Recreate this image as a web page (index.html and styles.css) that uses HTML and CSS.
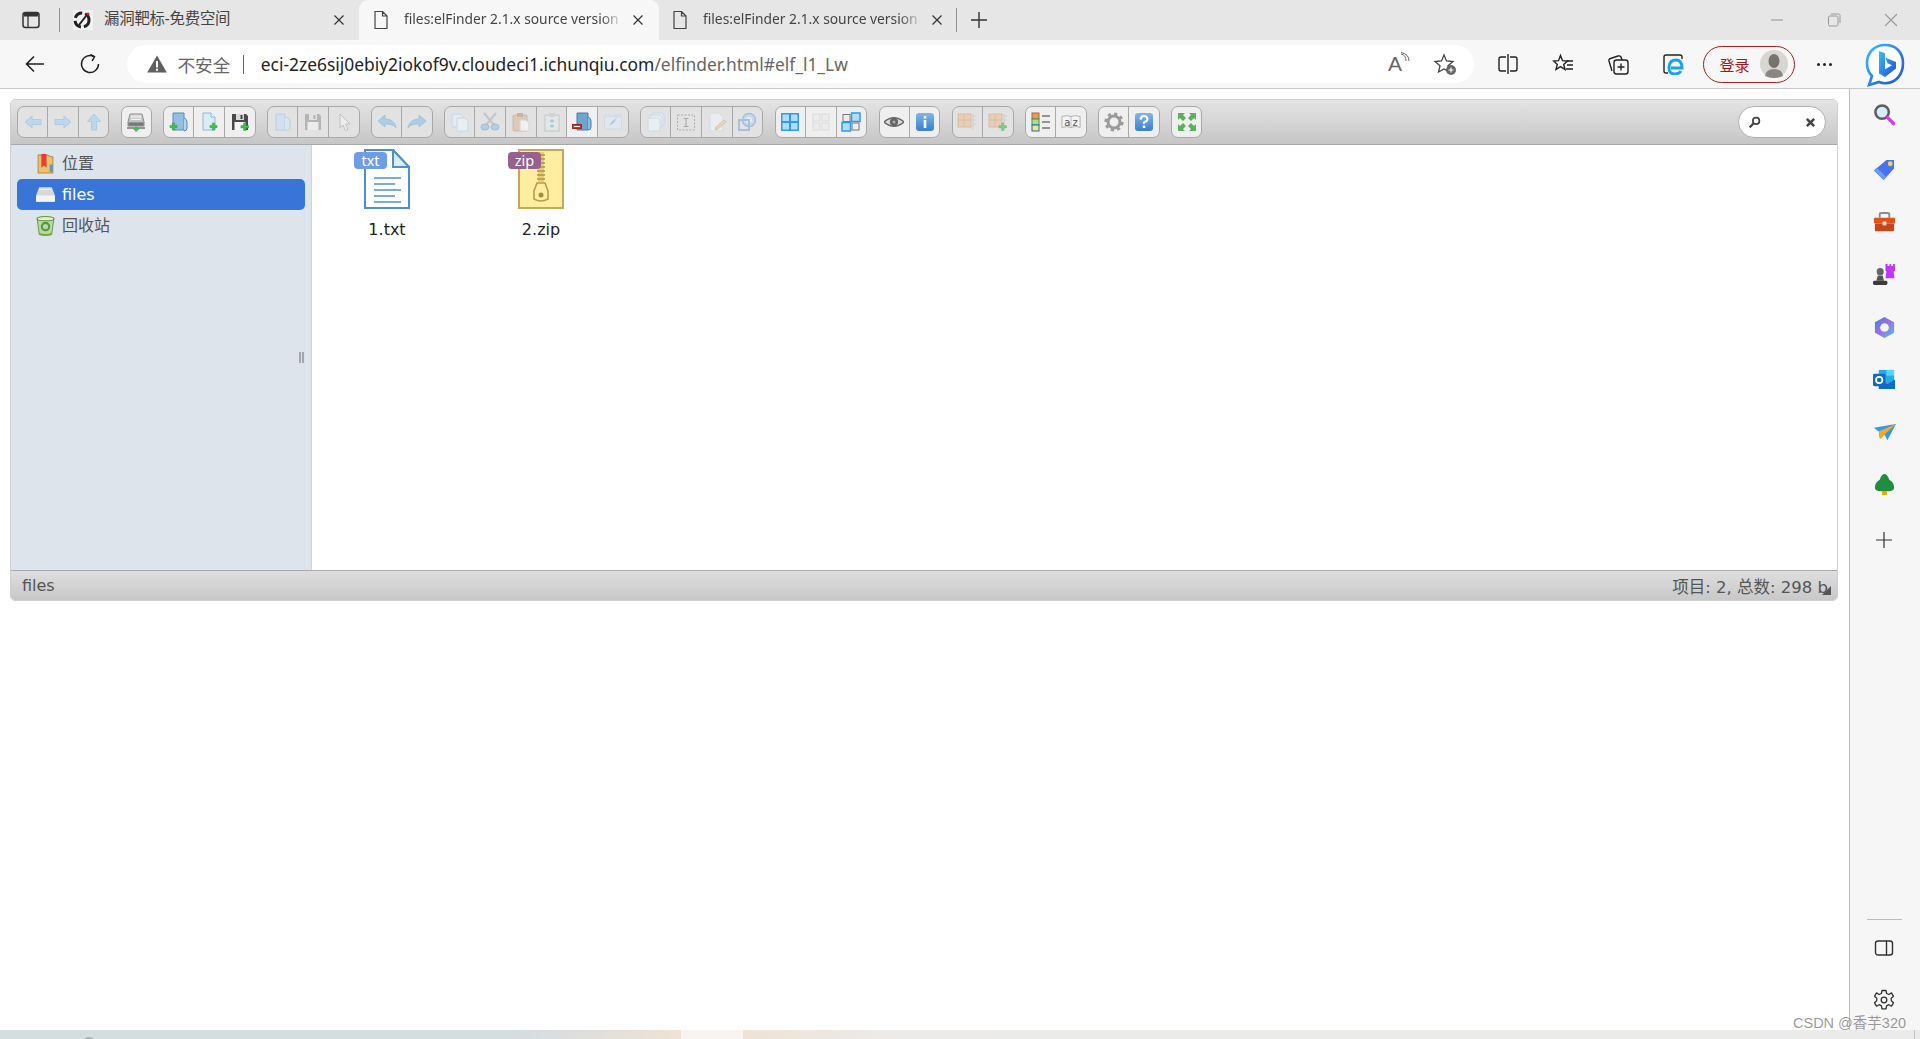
FILE: index.html
```html
<!DOCTYPE html>
<html lang="zh">
<head>
<meta charset="utf-8">
<title>files:elFinder 2.1.x source version</title>
<link rel="stylesheet" href="styles.css">
</head>
<body>
<svg class="defs" width="0" height="0" aria-hidden="true">
  <defs>
    <linearGradient id="gBlue" x1="0" y1="0" x2="0" y2="1"><stop offset="0" stop-color="#7fb6ea"/><stop offset="1" stop-color="#3b7fcb"/></linearGradient>
    <linearGradient id="gBing" x1="0" y1="0" x2="1" y2="1"><stop offset="0" stop-color="#37bdf8"/><stop offset="1" stop-color="#1e4fd8"/></linearGradient>
    <linearGradient id="gDrive" x1="0" y1="0" x2="0" y2="1"><stop offset="0" stop-color="#e2e2e2"/><stop offset="1" stop-color="#a8a8a8"/></linearGradient>
    <linearGradient id="gM" x1="0" y1="0" x2="1" y2="1"><stop offset="0" stop-color="#3f7fe0"/><stop offset=".5" stop-color="#a070e0"/><stop offset="1" stop-color="#40c8e8"/></linearGradient>
    <symbol id="plus" viewBox="0 0 20 20"><path d="M7.500 2h5v5.500h5.500v5h-5.500v5.500h-5v-5.500h-5.500v-5h5.500z" fill="#3fc04f" stroke="#2a9a3a"/></symbol>
    <symbol id="i-back" viewBox="0 0 20 20"><path d="M2 10l7-6v3.500h9v5H9V16z" fill="#a6d0f0" stroke="#8cbde2"/></symbol>
    <symbol id="i-forward" viewBox="0 0 20 20"><path d="M18 10l-7-6v3.500H2v5h9V16z" fill="#a6d0f0" stroke="#8cbde2"/></symbol>
    <symbol id="i-up" viewBox="0 0 20 20"><path d="M10 2l6.500 7.500h-4V18h-5V9.500h-4z" fill="#a6d0f0" stroke="#8cbde2"/></symbol>
    <symbol id="i-drive" viewBox="0 0 20 20"><path d="M4 2h12l2 8v4H2v-4z" fill="url(#gDrive)" stroke="#888"/><rect x="2.500" y="10.500" width="15" height="3" fill="#777"/><path d="M5 5h10M5 7.500h10" stroke="#f2f2f2"/><path d="M1 16h18" stroke="#777" stroke-width="1.300"/><rect x="9" y="14.500" width="2.400" height="5" fill="#3fc04f"/><rect x="7.500" y="15.700" width="5.400" height="2.400" fill="#3fc04f"/></symbol>
    <symbol id="i-mkdir" viewBox="0 0 20 20"><path d="M4 1h11v17H4z" fill="#94bfe2" stroke="#4c8dc0"/><path d="M15 6q3 1 3 4v6q0 3-3 3" fill="#b6d4ec" stroke="#4c8dc0"/><use href="#plus" x="0" y="10" width="9" height="9"/></symbol>
    <symbol id="i-mkfile" viewBox="0 0 20 20"><path d="M4 1h8l4 4v13H4z" fill="#dcebf8" stroke="#8cb8dc"/><path d="M12 1v4h4" fill="#f4f9fd" stroke="#8cb8dc"/><use href="#plus" x="10" y="10" width="9" height="9"/></symbol>
    <symbol id="i-upload" viewBox="0 0 20 20"><path d="M2 2h14l2 2v14H2z" fill="#4a4a4a"/><rect x="6" y="2" width="8" height="6" fill="#d8d8d8"/><rect x="10.500" y="3" width="2" height="4" fill="#444"/><rect x="4.500" y="10" width="11" height="8" fill="#f5f5f5"/><use href="#plus" x="10" y="10" width="9.500" height="9.500"/></symbol>
    <symbol id="i-open" viewBox="0 0 20 20"><path d="M3 2h9v16H3z" fill="#c6dff2" stroke="#9cc4e0"/><path d="M12 5q5 1 5 4v7q0 3-5 2" fill="#d6e8f6" stroke="#9cc4e0"/></symbol>
    <symbol id="i-save" viewBox="0 0 20 20"><path d="M2 2h14l2 2v14H2z" fill="#9a9a9a"/><rect x="6" y="2" width="8" height="6" fill="#e2e2e2"/><rect x="10.500" y="3" width="2" height="4" fill="#999"/><rect x="4.500" y="10" width="11" height="8" fill="#f2f2f2"/></symbol>
    <symbol id="i-select" viewBox="0 0 20 20"><path d="M6 2l10 10h-4.500l2.500 5.500-2.500 1-2.500-5.500L6 16z" fill="#f4f4f4" stroke="#aaa"/></symbol>
    <symbol id="i-undo" viewBox="0 0 20 20"><path d="M1 9l7-6v4c6 0 10 3 11 9-2-3-5-4-11-4v3z" fill="#8fc0e8" stroke="#7aaed8"/></symbol>
    <symbol id="i-redo" viewBox="0 0 20 20"><path d="M19 9l-7-6v4C6 7 2 10 1 16c2-3 5-4 11-4v3z" fill="#8fc0e8" stroke="#7aaed8"/></symbol>
    <symbol id="i-copy" viewBox="0 0 20 20"><path d="M2 2h8l3 3v10H2z" fill="#e4eff8" stroke="#b6d2e8"/><path d="M7 6h8l3 3v10H7z" fill="#eef5fb" stroke="#b6d2e8"/></symbol>
    <symbol id="i-cut" viewBox="0 0 20 20"><path d="M4 1l10 12M16 1L6 13" stroke="#b0b4b8" stroke-width="2" fill="none"/><ellipse cx="5" cy="15" rx="4" ry="3" fill="#98c2e4" stroke="#6ea4d0"/><ellipse cx="15" cy="15" rx="4" ry="3" fill="#98c2e4" stroke="#6ea4d0"/></symbol>
    <symbol id="i-paste" viewBox="0 0 20 20"><rect x="2" y="3" width="14" height="16" rx="1" fill="#dcb89c" stroke="#c49c80"/><rect x="6" y="1" width="6" height="4" fill="#b89880"/><path d="M9 8h6l3 3v8H9z" fill="#f8f8f8" stroke="#ccc"/></symbol>
    <symbol id="i-dup" viewBox="0 0 20 20"><rect x="3" y="3" width="14" height="16" fill="#e4e8ea" stroke="#b4b8ba"/><rect x="7" y="1" width="6" height="4" fill="#c4c8ca"/><path d="M8 9h4M8 14h4" stroke="#88b8dc" stroke-width="2"/><path d="M10 7v4M10 12v4" stroke="#88b8dc"/></symbol>
    <symbol id="i-rm" viewBox="0 0 20 20"><path d="M5 1h11v17H5z" fill="#6fa3d0" stroke="#3f7fb6"/><path d="M16 5q3 1 3 4v6q0 3-3 3" fill="#94bcdc" stroke="#3f7fb6"/><rect x="0.500" y="12.500" width="9" height="4" fill="#d8342c" stroke="#a82420"/><path d="M2 14.500h6" stroke="#fff"/></symbol>
    <symbol id="i-empty" viewBox="0 0 20 20"><rect x="1.500" y="3" width="17" height="14" fill="#e0edf6" stroke="#c2d8ea"/><rect x="1.500" y="3" width="17" height="2.500" fill="#c8deef"/><path d="M6 14l3-5 5-3-3 5z" fill="#9cbde0"/></symbol>
    <symbol id="i-clone" viewBox="0 0 20 20"><path d="M6 1h10l2 2v10H6z" fill="#e4eef6" stroke="#c0d6e6"/><path d="M4 3h10l2 2v10H4z" fill="#e8f1f8" stroke="#c0d6e6"/><path d="M2 6h10l2 2v11H2z" fill="#eef5fa" stroke="#c0d6e6"/></symbol>
    <symbol id="i-rename" viewBox="0 0 20 20"><rect x="1.500" y="3" width="17" height="15" fill="none" stroke="#8c8c8c" stroke-dasharray="2 1.500"/><path d="M7.500 6.500h5M7.500 14.500h5M10 6.500v8" stroke="#8c8c8c" stroke-width="1.200"/></symbol>
    <symbol id="i-edit" viewBox="0 0 20 20"><path d="M3 1h9l4 4v14H3z" fill="#eef4f9" stroke="#c6d8e6"/><path d="M8 18l1-3 8-7 2 2-8 7z" fill="#e8cf9c" stroke="#d4b880"/></symbol>
    <symbol id="i-resize" viewBox="0 0 20 20"><circle cx="12" cy="8" r="6.500" fill="#b8d6ec" stroke="#7eb0d6" stroke-width="1.500"/><circle cx="12" cy="8" r="3" fill="#e8f2f9"/><rect x="2" y="8" width="10" height="10" fill="none" stroke="#7eb0d6" stroke-width="2"/></symbol>
    <symbol id="i-all" viewBox="0 0 20 20"><rect x="1" y="1" width="18" height="18" fill="#2d9bf0"/><rect x="2.500" y="2.500" width="6.500" height="6.500" fill="#b3dcfa"/><rect x="11" y="2.500" width="6.500" height="6.500" fill="#b3dcfa"/><rect x="2.500" y="11" width="6.500" height="6.500" fill="#b3dcfa"/><rect x="11" y="11" width="6.500" height="6.500" fill="#b3dcfa"/></symbol>
    <symbol id="i-none" viewBox="0 0 20 20"><rect x="2" y="2" width="7" height="7" fill="#e8e8e8" stroke="#ccc"/><rect x="11" y="2" width="7" height="7" fill="#e8e8e8" stroke="#ccc"/><rect x="2" y="11" width="7" height="7" fill="#e8e8e8" stroke="#ccc"/><rect x="11" y="11" width="7" height="7" fill="#e8e8e8" stroke="#ccc"/></symbol>
    <symbol id="i-invert" viewBox="0 0 20 20"><rect x="2" y="2.500" width="7" height="7" fill="#eee" stroke="#777"/><rect x="10.500" y="1" width="8.500" height="8.500" fill="#b3dcfa" stroke="#2d9bf0" stroke-width="1.500"/><rect x="1" y="10.500" width="8.500" height="8.500" fill="#b3dcfa" stroke="#2d9bf0" stroke-width="1.500"/><rect x="11" y="11" width="7" height="7" fill="#eee" stroke="#777"/></symbol>
    <symbol id="i-eye" viewBox="0 0 20 20"><path d="M0 10q10-8.500 20 0q-10 8.500-20 0z" fill="#dcdcdc" stroke="#666" stroke-width="1.400"/><circle cx="10" cy="10" r="4.200" fill="#666"/><circle cx="10" cy="10" r="1.500" fill="#aaa"/></symbol>
    <symbol id="i-info" viewBox="0 0 20 20"><rect x="1" y="1" width="18" height="18" rx="3" fill="url(#gBlue)"/><rect x="8.700" y="4" width="2.600" height="2.600" fill="#fff"/><rect x="8.700" y="8" width="2.600" height="8" fill="#fff"/></symbol>
    <symbol id="i-help" viewBox="0 0 20 20"><rect x="1" y="1" width="18" height="18" rx="3" fill="url(#gBlue)"/><path d="M6.500 7.500Q7 4 10 4t3.500 3q0 2-3.500 3.500V12" fill="none" stroke="#fff" stroke-width="2.200"/><rect x="8.800" y="13.500" width="2.500" height="2.500" fill="#fff"/></symbol>
    <symbol id="i-extract" viewBox="0 0 20 20"><rect x="1" y="2" width="13" height="13" fill="#e8c49c" stroke="#d0a878"/><path d="M1 8h13M7 2v13" stroke="#d0a878"/><path d="M16 2v15M14 4h5M14 8h5M14 12h5" stroke="#ccc" stroke-width="1.500"/></symbol>
    <symbol id="i-archive" viewBox="0 0 20 20"><rect x="1" y="2" width="13" height="13" fill="#e8c49c" stroke="#d0a878"/><path d="M1 8h13M7 2v13" stroke="#d0a878"/><path d="M16 2v10M14 4h5M14 8h5" stroke="#ccc" stroke-width="1.500"/><use href="#plus" x="10" y="10" width="9.500" height="9.500"/></symbol>
    <symbol id="i-view" viewBox="0 0 20 20"><rect x="1" y="1" width="7" height="6" fill="#e89a5c" stroke="#b0682c"/><rect x="1" y="7" width="7" height="6" fill="#a6dc9c" stroke="#3e9a3a"/><rect x="1" y="13" width="7" height="6" fill="#f4e28c" stroke="#2a64b0"/><path d="M11 4h8M11 10h8M11 16h8" stroke="#777" stroke-width="1.400"/></symbol>
    <symbol id="i-sort" viewBox="0 0 22 20"><path d="M1 4q5-2 10 0q5-2 10 0v12q-5-2-10 0q-5-2-10 0z" fill="#f4f4f4" stroke="#aaa"/><path d="M11 4v12" stroke="#bbb"/></symbol>
    <symbol id="i-gear" viewBox="0 0 20 20"><circle cx="10" cy="10" r="6" fill="none" stroke="#9a9a9a" stroke-width="3"/><circle cx="10" cy="10" r="8.300" fill="none" stroke="#9a9a9a" stroke-width="2.600" stroke-dasharray="3.200 3.300"/></symbol>
    <symbol id="i-full" viewBox="0 0 20 20"><g fill="#5bb05b"><path d="M1 1h7L6 3l3 3-3 3-3-3-2 2z"/><path d="M19 1v7l-2-2-3 3-3-3 3-3-2-2z"/><path d="M1 19v-7l2 2 3-3 3 3-3 3 2 2z"/><path d="M19 19h-7l2-2-3-3 3-3 3 3 2-2z"/></g></symbol>
    <symbol id="i-doc" viewBox="0 0 16 20"><path d="M2 1.500h7.500L14 6v12.500H2z M9.500 1.500V6H14" fill="none" stroke="#444" stroke-width="1.200" stroke-linejoin="round"/></symbol>
  </defs>
</svg>

<div class="app">
  <header class="tabstrip">
    <svg class="panel-btn" viewBox="0 0 20 20" width="20" height="20"><rect x="2" y="2.500" width="16" height="15" rx="2.500" fill="none" stroke="#333" stroke-width="1.500"/><path d="M3 3h14v3.500H3z" fill="#333"/><path d="M7 6v11" stroke="#333" stroke-width="1.300"/></svg>
    <span class="strip-sep"></span>
    <div class="tab tab-first">
      <svg class="favicon" viewBox="0 0 20 20" width="20" height="20"><rect width="20" height="20" fill="#f2f2f2"/><circle cx="9" cy="10" r="7" fill="none" stroke="#222" stroke-width="3" stroke-dasharray="9 3"/><path d="M6 15L13 6" stroke="#222" stroke-width="2"/><circle cx="15" cy="4" r="1.500" fill="#d82020"/></svg>
      <span class="tab-title">漏洞靶标-免费空间</span>
      <svg class="tab-x" viewBox="0 0 12 12" width="12" height="12"><path d="M1.500 1.500l9 9M10.500 1.500l-9 9" stroke="#333" stroke-width="1.200"/></svg>
    </div>
    <div class="tab tab-active">
      <svg class="doc" width="16" height="20"><use href="#i-doc"/></svg>
      <span class="tab-title tab-fade">files:elFinder 2.1.x source version</span>
      <svg class="tab-x" viewBox="0 0 12 12" width="12" height="12"><path d="M1.500 1.500l9 9M10.500 1.500l-9 9" stroke="#333" stroke-width="1.200"/></svg>
    </div>
    <div class="tab tab-third">
      <svg class="doc" width="16" height="20"><use href="#i-doc"/></svg>
      <span class="tab-title tab-fade">files:elFinder 2.1.x source version</span>
      <svg class="tab-x" viewBox="0 0 12 12" width="12" height="12"><path d="M1.500 1.500l9 9M10.500 1.500l-9 9" stroke="#333" stroke-width="1.200"/></svg>
    </div>
    <span class="strip-sep strip-sep-b"></span>
    <svg class="new-tab" viewBox="0 0 18 18" width="18" height="18"><path d="M9 1v16M1 9h16" stroke="#333" stroke-width="1.400"/></svg>
    <div class="win-ctrls">
      <svg viewBox="0 0 14 14" width="14" height="14"><path d="M1 7h12" stroke="#999" stroke-width="1.100"/></svg>
      <svg viewBox="0 0 14 14" width="14" height="14"><rect x="1.500" y="3" width="9.500" height="10" rx="1.500" fill="none" stroke="#999"/><path d="M4 1h7.500q1.500 0 1.500 1.500V10" fill="none" stroke="#999"/></svg>
      <svg viewBox="0 0 14 14" width="14" height="14"><path d="M1 1l12 12M13 1L1 13" stroke="#999" stroke-width="1.100"/></svg>
    </div>
  </header>

  <nav class="navbar">
    <svg class="nav-back" viewBox="0 0 22 22" width="22" height="22"><path d="M20 11H3M10 3.500L2.500 11l7.500 7.500" fill="none" stroke="#222" stroke-width="1.600"/></svg>
    <svg class="nav-reload" viewBox="0 0 22 22" width="22" height="22"><path d="M15 3.500A8.500 8.500 0 1 0 19.500 11" fill="none" stroke="#222" stroke-width="1.500"/><path d="M11.500 1.500l4 2.300-2.300 4" fill="none" stroke="#222" stroke-width="1.500"/></svg>
    <div class="omnibox">
      <svg class="warn" viewBox="0 0 20 18" width="20" height="18"><path d="M10 .5L19.800 17.500H.2z" fill="#5f5f5f"/><rect x="9" y="6" width="2" height="6.500" fill="#fff"/><rect x="9" y="13.800" width="2" height="2" fill="#fff"/></svg>
      <span class="insecure">不安全</span>
      <span class="omni-sep"></span>
      <span class="url">eci-2ze6sij0ebiy2iokof9v.cloudeci1.ichunqiu.com<span class="url-rest">/elfinder.html#elf_l1_Lw</span></span>
      <span class="read-aloud">A<svg viewBox="0 0 10 12" width="10" height="12"><path d="M1 2q5 1 5 7M1 .5Q9 2 9 9" fill="none" stroke="#666"/></svg></span>
      <svg class="fav-add" viewBox="0 0 24 24" width="24" height="24"><path d="M11 3l2.500 6 6.500.5-5 4.200 1.500 6.300L11 17l-5.500 3 1.500-6.300-5-4.200 6.500-.5z" fill="none" stroke="#444" stroke-width="1.300"/><circle cx="18" cy="18" r="5" fill="#666"/><path d="M18 15.500v5M15.500 18h5" stroke="#fff" stroke-width="1.200"/></svg>
    </div>
    <svg class="nav-ic ic-split" viewBox="0 0 22 22" width="22" height="22"><path d="M9 4H4q-2 0-2 2v10q0 2 2 2h5M13 4h5q2 0 2 2v10q0 2-2 2h-5M11 1v20" fill="none" stroke="#222" stroke-width="1.400"/></svg>
    <svg class="nav-ic ic-fav" viewBox="0 0 22 22" width="22" height="22"><path d="M8.500 2.500l2 5.200 5 .3-3.800 3.400 1.300 5.100-4.500-2.900-4.500 2.900 1.300-5.100L1.500 8l5-.3z" fill="none" stroke="#222" stroke-width="1.400"/><path d="M15 8h6M15 12h6M14 16h7" stroke="#222" stroke-width="1.400"/></svg>
    <svg class="nav-ic ic-coll" viewBox="0 0 22 22" width="22" height="22"><rect x="7" y="7" width="14" height="14" rx="2.500" fill="none" stroke="#222" stroke-width="1.400"/><path d="M14 10.500v7M10.500 14h7" stroke="#222" stroke-width="1.400"/><path d="M5 18L2 8q-.5-2 1.500-2.500L11 3q2-.5 3 1l1 3" fill="none" stroke="#222" stroke-width="1.400"/></svg>
    <svg class="nav-ic ic-ie" viewBox="0 0 22 22" width="22" height="22"><path d="M6 20H4q-2 0-2-2V4q0-2 2-2h14q2 0 2 2v2" fill="none" stroke="#222" stroke-width="1.400"/><path d="M9 15h11q0-8-6-8-6.500 0-7 7-.5 7 6 7 4 0 6-3" fill="none" stroke="#19a4e8" stroke-width="3"/></svg>
    <div class="login-pill">
      <span class="login-text">登录</span>
      <svg class="avatar" viewBox="0 0 28 28" width="28" height="28"><circle cx="14" cy="14" r="14" fill="#d8d6d2"/><ellipse cx="14" cy="11" rx="5.500" ry="7" fill="#77746f"/><path d="M5 26q1-7 9-7t9 7q-4 2-9 2t-9-2z" fill="#8a8782"/></svg>
    </div>
    <span class="dots"><i></i><i></i><i></i></span>
    <svg class="bing" viewBox="0 0 40 44" width="40" height="44"><path d="M20 2C9 2 2 10 2 20c0 6 2 10 5 13L4 42l10-3c2 .8 4 1.200 6 1.200 11 0 18-9 18-20S31 2 20 2z" fill="#fff" stroke="url(#gBing)" stroke-width="2.600"/><path d="M14 8l6 2.200v16l7-4-4.500-2-2-5.500L31 19v6.500L20 34l-6-3.500z" fill="url(#gBing)"/></svg>
  </nav>

  <div class="main">
    <main class="page">
      <section class="finder">
        <div class="fm-toolbar">
          <div class="tb-group off"><span class="tb"><svg><use href="#i-back"/></svg></span><span class="tb"><svg><use href="#i-forward"/></svg></span><span class="tb"><svg><use href="#i-up"/></svg></span></div>
          <div class="tb-group"><span class="tb"><svg><use href="#i-drive"/></svg></span></div>
          <div class="tb-group"><span class="tb"><svg><use href="#i-mkdir"/></svg></span><span class="tb"><svg><use href="#i-mkfile"/></svg></span><span class="tb"><svg><use href="#i-upload"/></svg></span></div>
          <div class="tb-group off"><span class="tb"><svg><use href="#i-open"/></svg></span><span class="tb"><svg><use href="#i-save"/></svg></span><span class="tb"><svg><use href="#i-select"/></svg></span></div>
          <div class="tb-group off"><span class="tb"><svg><use href="#i-undo"/></svg></span><span class="tb"><svg><use href="#i-redo"/></svg></span></div>
          <div class="tb-group off"><span class="tb"><svg><use href="#i-copy"/></svg></span><span class="tb"><svg><use href="#i-cut"/></svg></span><span class="tb"><svg><use href="#i-paste"/></svg></span><span class="tb"><svg><use href="#i-dup"/></svg></span><span class="tb tb-on"><svg><use href="#i-rm"/></svg></span><span class="tb"><svg><use href="#i-empty"/></svg></span></div>
          <div class="tb-group off"><span class="tb"><svg><use href="#i-clone"/></svg></span><span class="tb"><svg><use href="#i-rename"/></svg></span><span class="tb"><svg><use href="#i-edit"/></svg></span><span class="tb"><svg><use href="#i-resize"/></svg></span></div>
          <div class="tb-group"><span class="tb"><svg><use href="#i-all"/></svg></span><span class="tb tb-dim"><svg><use href="#i-none"/></svg></span><span class="tb"><svg><use href="#i-invert"/></svg></span></div>
          <div class="tb-group"><span class="tb"><svg><use href="#i-eye"/></svg></span><span class="tb"><svg><use href="#i-info"/></svg></span></div>
          <div class="tb-group off"><span class="tb"><svg><use href="#i-extract"/></svg></span><span class="tb"><svg><use href="#i-archive"/></svg></span></div>
          <div class="tb-group"><span class="tb"><svg><use href="#i-view"/></svg></span><span class="tb"><svg><use href="#i-sort"/></svg><b class="az">a z</b></span></div>
          <div class="tb-group"><span class="tb"><svg><use href="#i-gear"/></svg></span><span class="tb"><svg><use href="#i-help"/></svg></span></div>
          <div class="tb-group"><span class="tb"><svg><use href="#i-full"/></svg></span></div>
          <div class="search">
            <svg viewBox="0 0 12 12" width="13" height="13"><circle cx="7.500" cy="4.500" r="3" fill="none" stroke="#444" stroke-width="1.600"/><path d="M5 7L1.500 10.500" stroke="#444" stroke-width="2"/></svg>
            <svg viewBox="0 0 12 12" width="11" height="11"><path d="M2 2l8 8M10 2l-8 8" stroke="#444" stroke-width="2.600"/></svg>
          </div>
        </div>
        <div class="fm-body">
          <aside class="fm-nav">
            <div class="nav-row">
              <svg viewBox="0 0 20 20" width="21" height="21"><path d="M3 2h8l6 2v15H3z" fill="#e8c26c" stroke="#b88c3c"/><path d="M6 1h5v13l-2.500-2L6 14z" fill="#e83c34"/><rect x="14" y="11" width="3" height="7" fill="#6a94c0"/></svg>
              <span>位置</span>
            </div>
            <div class="nav-row nav-sel">
              <svg viewBox="0 0 20 20" width="21" height="21"><path d="M4 3h12l3 8v6H1v-6z" fill="#d8d8d8"/><rect x="1" y="11" width="18" height="6" rx="1" fill="#f4f4f4"/><path d="M4 5h12" stroke="#eee"/></svg>
              <span>files</span>
            </div>
            <div class="nav-row">
              <svg viewBox="0 0 20 20" width="21" height="21"><path d="M2 3h16l-2 15q-6 2-12 0z" fill="#bcd8a8" stroke="#6aa04a"/><ellipse cx="10" cy="3.500" rx="8" ry="2" fill="#dff0d0" stroke="#5a9a3a"/><circle cx="10" cy="11" r="3.500" fill="none" stroke="#4f9a3a" stroke-width="2"/><path d="M4 18q6 2 12 0" stroke="#6cb034" stroke-width="2" fill="none"/></svg>
              <span>回收站</span>
            </div>
            <span class="splitter"></span>
          </aside>
          <div class="fm-files">
            <figure class="file">
              <div class="file-ic">
                <svg viewBox="0 0 46 60" width="46" height="60"><path d="M1 1h28l16 17v41H1z" fill="#fff" stroke="#4d90d0" stroke-width="2"/><path d="M29 1v17h16z" fill="#dcecfa" stroke="#4d90d0" stroke-width="2"/><path d="M10 29h27M10 35h21M10 41h27M10 47h21M10 53h27" stroke="#4d90d0" stroke-width="1.500"/></svg>
                <span class="badge badge-txt">txt</span>
              </div>
              <figcaption>1.txt</figcaption>
            </figure>
            <figure class="file">
              <div class="file-ic">
                <svg viewBox="0 0 46 60" width="46" height="60"><rect x="1" y="1" width="44" height="58" fill="#ffeda0" stroke="#c8a858" stroke-width="2"/><path d="M20 3h6v30h-6z" fill="#e8cc78"/><path d="M19 6h8M19 10h8M19 14h8M19 18h8M19 22h8M19 26h8M19 30h8" stroke="#b0924c" stroke-width="1.600"/><path d="M19 34h8l3 8v8q-7 4-14 0v-8z" fill="#ffeda0" stroke="#b89a50" stroke-width="1.600"/><circle cx="23" cy="46" r="2.500" fill="#a88a48"/></svg>
                <span class="badge badge-zip">zip</span>
              </div>
              <figcaption>2.zip</figcaption>
            </figure>
          </div>
        </div>
        <footer class="fm-status">
          <span>files</span>
          <span class="stat-right">项目: 2, 总数: 298 b</span>
          <span class="grip"></span>
        </footer>
      </section>
    </main>
    <aside class="sidebar">
      <svg class="sb-ic sb-first" viewBox="0 0 24 24"><circle cx="9.500" cy="9.500" r="7" fill="#d6ecf8" stroke="#5c5c5c" stroke-width="2.600"/><path d="M15 15l6.500 6.500" stroke="#d43ce0" stroke-width="3.500" stroke-linecap="round"/></svg>
      <svg class="sb-ic" viewBox="0 0 24 24"><path d="M14 2h8v9L11 23 1 13z" fill="#4a72f0"/><path d="M1 13l10 10 3-3-10-10z" fill="#6c9af8"/><circle cx="18" cy="6" r="2.500" fill="#fcd34a"/></svg>
      <svg class="sb-ic" viewBox="0 0 24 24"><path d="M7 7V3.500Q7 2 9 2h6q2 0 2 1.500V7" fill="none" stroke="#8c8c8c" stroke-width="2"/><rect x="1" y="7" width="22" height="6" rx="1" fill="#e0521c"/><rect x="2" y="13" width="20" height="8" rx="1" fill="#c8441a"/><rect x="10" y="11" width="4" height="4" fill="#e8d8c8"/></svg>
      <svg class="sb-ic" viewBox="0 0 24 24"><path d="M13 1h2.200v2h2V1h1.800v2h2V1H23v7l-1.500 1 1 7H13l1-7-1-1z" fill="#c238f8"/><circle cx="7.500" cy="9" r="3.700" fill="#666"/><path d="M5 13h5l1.500 5.500h-8z" fill="#555"/><rect x="0" y="18.500" width="15" height="4.500" rx="1.500" fill="#3c3c3c"/></svg>
      <svg class="sb-ic" viewBox="0 0 24 24"><path d="M12 1l10 5.500v11L12 23 2 17.500v-11z" fill="url(#gM)"/><circle cx="12" cy="12" r="4.500" fill="#f5f5f5"/></svg>
      <svg class="sb-ic" viewBox="0 0 24 24"><path d="M6 2h16v18H6z" fill="#28a8ea"/><path d="M14 2h8v6h-8z" fill="#50d9ff"/><path d="M6 12l9 5 8-5v10H6z" fill="#0a6fc4"/><rect x="0" y="6" width="13" height="13" rx="1.500" fill="#0f6cbd"/><circle cx="6.500" cy="12.500" r="3.300" fill="none" stroke="#fff" stroke-width="1.800"/></svg>
      <svg class="sb-ic" viewBox="0 0 24 24"><path d="M1 7l23-4-9 17-3-6-5 4-1-7z" fill="#2c9cf0"/><path d="M6 11L24 3 12 14l-4 5z" fill="#f8a820"/></svg>
      <svg class="sb-ic" viewBox="0 0 24 24"><path d="M12 1q3 0 5 6 5 3 5 8 0 4-6 4H8q-6 0-6-4 0-5 5-8 2-6 5-6z" fill="#1f8f3f"/><rect x="9.500" y="19" width="5" height="4" fill="#f0a000"/></svg>
      <svg class="sb-plus" viewBox="0 0 16 16"><path d="M8 0v16M0 8h16" stroke="#333" stroke-width="1.200"/></svg>
      <span class="sb-hr"></span>
      <svg class="sb-split" viewBox="0 0 20 20"><rect x="1.500" y="3" width="17" height="14" rx="2.500" fill="none" stroke="#333" stroke-width="1.400"/><path d="M12.500 3v14" stroke="#333" stroke-width="1.400"/></svg>
      <svg class="sb-gear" viewBox="0 0 22 22"><path d="M9 1.500h4l.6 3 2.300 1 2.600-1.600 2 3.400-2.300 2 .1 2.500 2.200 2-2 3.400-2.700-1.500-2.200 1.100-.6 3h-4l-.6-3-2.200-1.100-2.700 1.500-2-3.400 2.200-2 .1-2.500-2.300-2 2-3.400 2.600 1.600 2.300-1z" fill="none" stroke="#333" stroke-width="1.300" stroke-linejoin="round"/><circle cx="11" cy="11" r="2.800" fill="none" stroke="#333" stroke-width="1.300"/></svg>
    </aside>
  </div>

  <footer class="taskbar">
    <span class="tb-dot"></span>
    <span class="tb-patch"></span>
    <span class="tb-clock">12:30</span>
    <span class="tb-end"></span>
  </footer>
</div>
<span class="watermark">CSDN @香芋320</span>
</body>
</html>
```

FILE: styles.css
```css
* { box-sizing: border-box; }
html, body { margin: 0; height: 100%; overflow: hidden; }
body { background: #fff; font-family: "Noto Sans", "Noto Sans CJK SC", sans-serif; color: #222; position: relative; }
.defs { position: absolute; }
svg { display: block; flex: none; }

.app { display: flex; flex-direction: column; height: 1039px; }

/* tab strip */
.tabstrip { height: 40px; flex: none; background: #e6e6e6; display: flex; align-items: center; padding-left: 21px; }
.strip-sep { width: 1px; height: 24px; background: #8f8f8f; margin-left: 18px; }
.strip-sep-b { margin-left: 0; }
.tab { height: 40px; display: flex; align-items: center; font-size: 13.800px; color: #444; position: relative; }
.tab-first { width: 299px; padding-left: 13px; font-size: 15.400px; }
.tab-active { width: 300px; background: #f7f7f7; border-radius: 9px 9px 0 0; padding-left: 14px; }
.tab-third { width: 297px; padding-left: 13px; }
.tab-title { white-space: nowrap; line-height: 20px; margin-top: -2px; }
.tab-fade { width: 214px; margin-left: 15px; -webkit-mask-image: linear-gradient(90deg, #000 92%, rgba(0,0,0,.25)); mask-image: linear-gradient(90deg, #000 92%, rgba(0,0,0,.25)); }
.tab-first .tab-title { width: 127px; margin-right: 102px; margin-left: 11px; letter-spacing: -.2px; }
.tab-active .tab-x, .tab-third .tab-x { margin-left: 14px; }
.new-tab { margin-left: 13px; }
.win-ctrls { margin-left: auto; display: flex; gap: 43px; margin-right: 22px; }

/* address row */
.navbar { height: 49px; flex: none; background: #f7f7f7; border-bottom: 1px solid #c8c8c8; display: flex; align-items: center; padding-left: 24px; }
.nav-reload { margin-left: 33px; }
.omnibox { margin-left: 26px; width: 1347px; height: 38px; border-radius: 19px; background: #fff; display: flex; align-items: center; padding: 0 17px 0 20px; }
.insecure { margin-left: 10.500px; font-size: 17.600px; color: #666; white-space: nowrap; }
.omni-sep { width: 1px; height: 19px; background: #666; margin-left: 12.500px; }
.url { flex: 1; margin-left: 17px; font-size: 17.400px; color: #222; white-space: nowrap; }
.url-rest { color: #666; }
.read-aloud { font-size: 21px; color: #666; display: flex; font-family: "Liberation Sans", sans-serif; line-height: 24px; width: 22px; }
.read-aloud svg { margin-left: -2px; }
.fav-add { margin-left: 23px; }
.nav-ic { margin-left: 33px; }
.ic-split { margin-left: 23px; }
.login-pill { margin-left: 18.500px; width: 92px; height: 37px; border: 1.500px solid #b01c1c; border-radius: 19px; display: flex; align-items: center; padding-left: 16px; }
.login-text { color: #a81414; font-size: 15px; width: 41px; }
.avatar { margin-left: -1px; }
.dots { margin-left: 22px; display: flex; gap: 3px; }
.dots i { width: 3px; height: 3px; border-radius: 50%; background: #222; }
.bing { margin-left: 33px; margin-top: 2px; }

/* main */
.main { flex: 1; min-height: 0; display: flex; }
.page { flex: 1; min-width: 0; padding: 10px 11px 0 10px; background: #fff; }
.sidebar { width: 71px; flex: none; background: #f6f6f6; border-left: 1px solid #bdbdbd; display: flex; flex-direction: column; align-items: center; padding-top: 14px; padding-right: 2px; }
.sb-ic { width: 23px; height: 23px; margin-bottom: 29.500px; }
.sb-first { margin-bottom: 32px; }
.sb-plus { width: 16px; height: 16px; margin-top: 6px; }
.sb-hr { width: 35px; height: 1px; background: #bbb; margin-top: 371px; }
.sb-split { width: 20px; height: 20px; margin-top: 18px; }
.sb-gear { width: 22px; height: 22px; margin-top: 31px; }

/* file manager */
.finder { height: 502px; display: flex; flex-direction: column; border: 1px solid #cfcfcf; border-radius: 5px; overflow: hidden; font-family: "DejaVu Sans", "Noto Sans CJK SC", sans-serif; }
.fm-toolbar { height: 45px; flex: none; display: flex; align-items: center; gap: 11.500px; padding: 0 11px 0 6px; background: linear-gradient(#e4e4e4, #c6c6c6); border-bottom: 1px solid #a8a8a8; }
.tb-group { display: flex; height: 32px; border: 1px solid #a8a8a8; border-radius: 7px; overflow: hidden; background: #efefef; }
.tb-group.off { background: #e2e2e2; }
.tb { width: 30.700px; display: flex; align-items: center; justify-content: center; position: relative; border-left: 1px solid #a8a8a8; }
.tb:first-child { border-left: 0; width: 29px; }
.tb svg { width: 20px; height: 20px; }
.off .tb svg { opacity: .62; }
.off .tb-on { background: #f0f0f0; }
.off .tb-on svg { opacity: 1; }
.tb-dim svg { opacity: .55; }
.az { position: absolute; font: 400 10px "DejaVu Sans", sans-serif; color: #555; word-spacing: -1px; }
.search { margin-left: auto; width: 88px; height: 32px; border-radius: 16px; background: #fff; border: 1px solid #b0b0b0; display: flex; align-items: center; justify-content: space-between; padding: 0 9px; }

.fm-body { flex: 1; min-height: 0; display: flex; background: #fff; }
.fm-nav { width: 301px; flex: none; background: #dde4ec; border-right: 1px solid #cdd3da; padding: 3px 6px 0 6px; position: relative; }
.nav-row { height: 31px; display: flex; align-items: center; gap: 6px; padding-left: 18px; font-size: 16px; line-height: 20px; color: #555; border-radius: 5px; }
.nav-sel { background: #3875d7; color: #fff; }
.splitter { position: absolute; right: 7px; top: 207px; width: 5px; height: 11px; border-left: 2px solid #a0a6ac; border-right: 2px solid #a0a6ac; }

.fm-files { flex: 1; display: flex; align-items: flex-start; padding-top: 4px; margin-left: -2px; }
.file { width: 154px; margin: 0; display: flex; flex-direction: column; align-items: center; }
.file-ic { position: relative; width: 46px; height: 60px; }
.badge { position: absolute; left: -10px; top: 3px; width: 33px; height: 17px; border-radius: 4px; color: #fff; font: 14.500px/16px "Noto Sans", sans-serif; text-align: center; }
.badge-txt { background: #6f9ce6; }
.badge-zip { background: #96608f; }
.file figcaption { margin-top: 12px; font-size: 16px; line-height: 18px; color: #222; }

.fm-status { height: 30px; flex: none; display: flex; align-items: center; justify-content: space-between; padding: 0 9px 0 11px; background: linear-gradient(#dedede, #c8c8c8); border-top: 1px solid #aaa; color: #555; font-size: 16px; position: relative; }
.stat-right { font-size: 16.500px; }
.grip { position: absolute; right: 6px; bottom: 5px; width: 0; height: 0; border-left: 9px solid transparent; border-bottom: 9px solid #555; }

/* taskbar strip */
.taskbar { height: 9px; flex: none; position: relative; overflow: hidden; background: linear-gradient(90deg, #d6dde0 0, #d6dde0 530px, #f0e2d5 681px, #f0e2d5 743px, #ecebea 900px, #ebebeb 1920px); }
.tb-dot { position: absolute; left: 81px; top: 7px; width: 16px; height: 16px; border-radius: 50%; background: #aeb4b8; }
.tb-patch { position: absolute; left: 681px; top: 0; width: 62px; height: 9px; background: #f9f4ef; }
.tb-clock { position: absolute; left: 1789px; top: 5px; font: 14px "Noto Sans", sans-serif; color: #222; letter-spacing: 1px; }
.tb-end { position: absolute; left: 1914px; top: 0; width: 1px; height: 9px; background: #c4c4c4; }

.watermark { position: absolute; left: 1793px; top: 1014px; font: 14.500px/18px "Liberation Sans", "Noto Sans CJK SC", sans-serif; color: rgba(120,120,120,.75); white-space: nowrap; }
```
